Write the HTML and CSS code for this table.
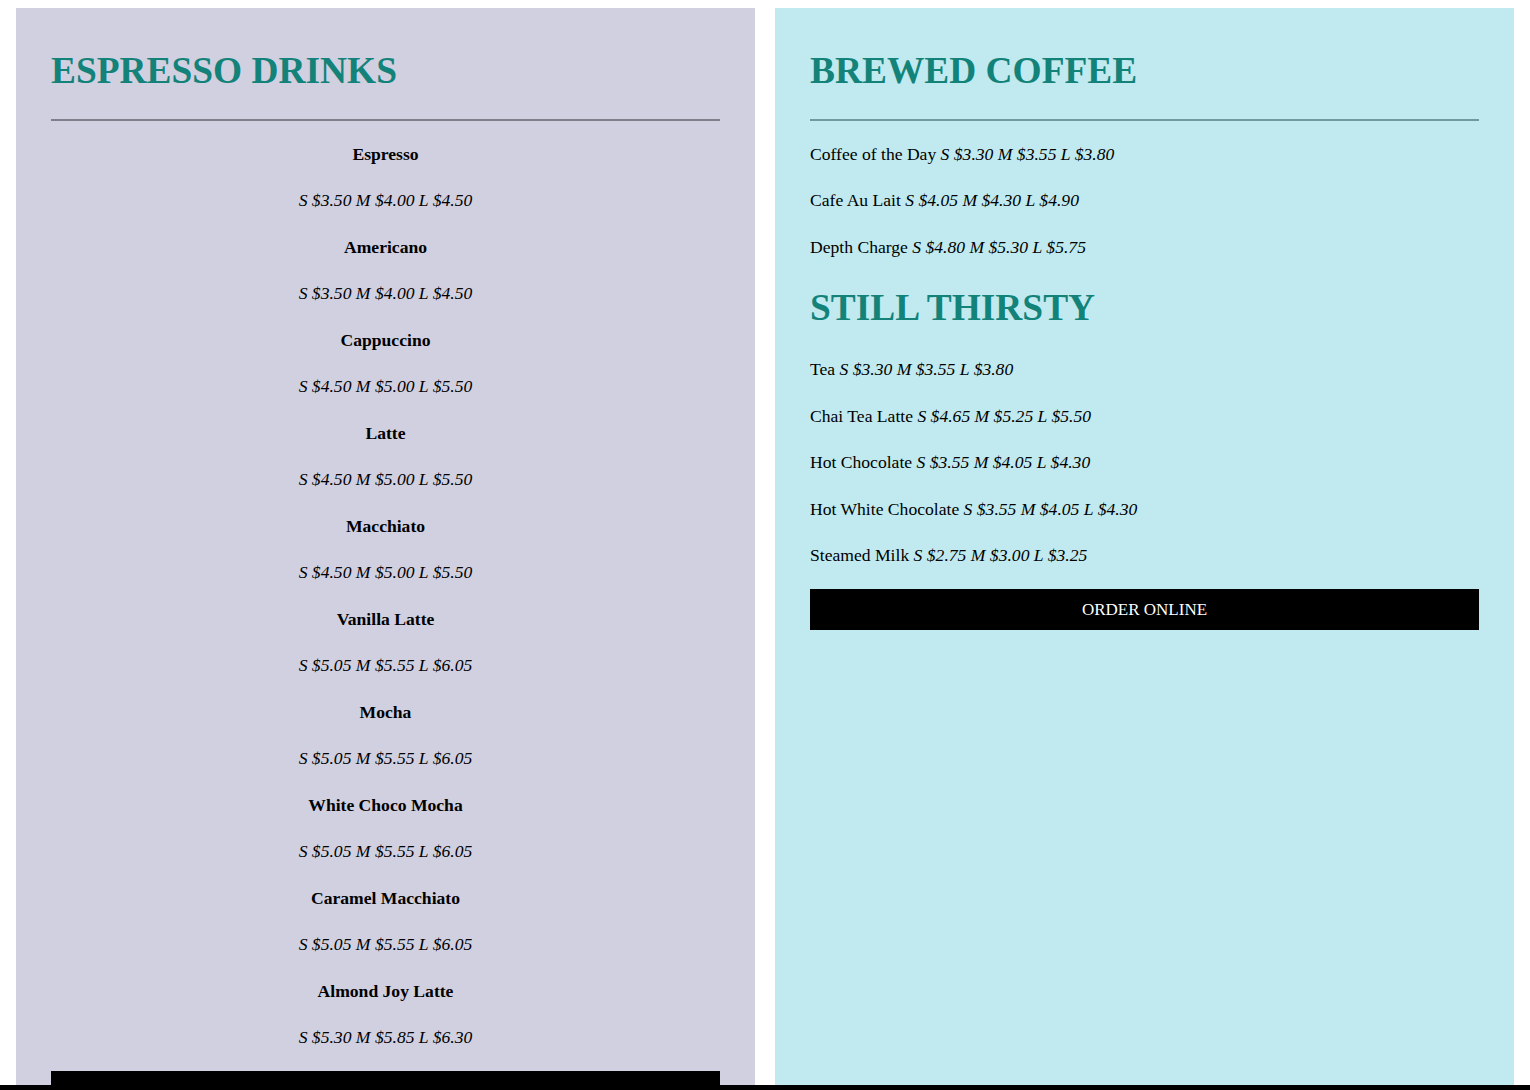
FILE: index.html
```html
<!DOCTYPE html>
<html lang="en">
<head>
<meta charset="utf-8">
<title>Coffee Menu</title>
<link rel="stylesheet" href="styles.css">
</head>
<body>
<main class="menu">
  <section class="panel panel-espresso">
    <h2 class="heading">ESPRESSO DRINKS</h2>
    <hr class="rule">
    <div class="centered">
      <p class="item-name">Espresso</p>
      <p class="price">S $3.50 M $4.00 L $4.50</p>
      <p class="item-name">Americano</p>
      <p class="price">S $3.50 M $4.00 L $4.50</p>
      <p class="item-name">Cappuccino</p>
      <p class="price">S $4.50 M $5.00 L $5.50</p>
      <p class="item-name">Latte</p>
      <p class="price">S $4.50 M $5.00 L $5.50</p>
      <p class="item-name">Macchiato</p>
      <p class="price">S $4.50 M $5.00 L $5.50</p>
      <p class="item-name">Vanilla Latte</p>
      <p class="price">S $5.05 M $5.55 L $6.05</p>
      <p class="item-name">Mocha</p>
      <p class="price">S $5.05 M $5.55 L $6.05</p>
      <p class="item-name">White Choco Mocha</p>
      <p class="price">S $5.05 M $5.55 L $6.05</p>
      <p class="item-name">Caramel Macchiato</p>
      <p class="price">S $5.05 M $5.55 L $6.05</p>
      <p class="item-name">Almond Joy Latte</p>
      <p class="price">S $5.30 M $5.85 L $6.30</p>
    </div>
    <button class="order" type="button">ORDER ONLINE</button>
  </section>
  <section class="panel panel-brewed">
    <h2 class="heading">BREWED COFFEE</h2>
    <hr class="rule">
    <p class="row">Coffee of the Day <em class="price">S $3.30 M $3.55 L $3.80</em></p>
    <p class="row">Cafe Au Lait <em class="price">S $4.05 M $4.30 L $4.90</em></p>
    <p class="row">Depth Charge <em class="price">S $4.80 M $5.30 L $5.75</em></p>
    <h2 class="heading heading-sub">STILL THIRSTY</h2>
    <p class="row">Tea <em class="price">S $3.30 M $3.55 L $3.80</em></p>
    <p class="row">Chai Tea Latte <em class="price">S $4.65 M $5.25 L $5.50</em></p>
    <p class="row">Hot Chocolate <em class="price">S $3.55 M $4.05 L $4.30</em></p>
    <p class="row">Hot White Chocolate <em class="price">S $3.55 M $4.05 L $4.30</em></p>
    <p class="row">Steamed Milk <em class="price">S $2.75 M $3.00 L $3.25</em></p>
    <button class="order" type="button">ORDER ONLINE</button>
  </section>
</main>
<footer class="footer-strip"></footer>
</body>
</html>
```
FILE: styles.css
```css
html, body {
  margin: 0;
  padding: 0;
  background: #ffffff;
}

body {
  font-family: "Liberation Serif", "Times New Roman", serif;
  font-size: 17.6px;
  color: #000000;
}

.menu {
  display: grid;
  grid-template-columns: 1fr 1fr;
  gap: 20px;
  padding: 8px 16px 0;
}

.panel {
  padding: 40.5px 35px 35px;
  display: flex;
  flex-direction: column;
}

.panel-espresso {
  background: #d1d0e1;
}

.panel-brewed {
  background: #c0eaef;
}

.heading {
  margin: 0;
  font-size: 37.4px;
  line-height: 43px;
  font-weight: bold;
  color: #13837a;
}

.heading-sub {
  margin: 25.7px 0 27.2px;
}

.rule {
  margin: 27.5px 0 0;
  border: 0;
  height: 2px;
}

.panel-espresso .rule {
  background: #7f7f8b;
}

.panel-brewed .rule {
  background: #6f999f;
}

.centered {
  text-align: center;
  margin-top: 19.5px;
}

.centered p {
  margin: 0 0 19.5px;
  line-height: 27px;
}

.centered p:last-child {
  margin-bottom: 0;
}

.item-name {
  font-weight: bold;
}

.price {
  font-style: italic;
}

.row {
  margin: 19.5px 0 0;
  line-height: 27px;
}

.rule + .row {
  margin-top: 19.6px;
}

.heading-sub + .row {
  margin-top: 0;
}

.order {
  margin-top: 20px;
  height: 41px;
  width: 100%;
  border: 0;
  background: #000000;
  color: #ffffff;
  font-family: "Liberation Serif", "Times New Roman", serif;
  font-size: 17px;
  padding: 0;
  cursor: pointer;
}

.footer-strip {
  position: fixed;
  left: 0;
  right: 0;
  bottom: 0;
  height: 5px;
  background: #000000;
}
```
